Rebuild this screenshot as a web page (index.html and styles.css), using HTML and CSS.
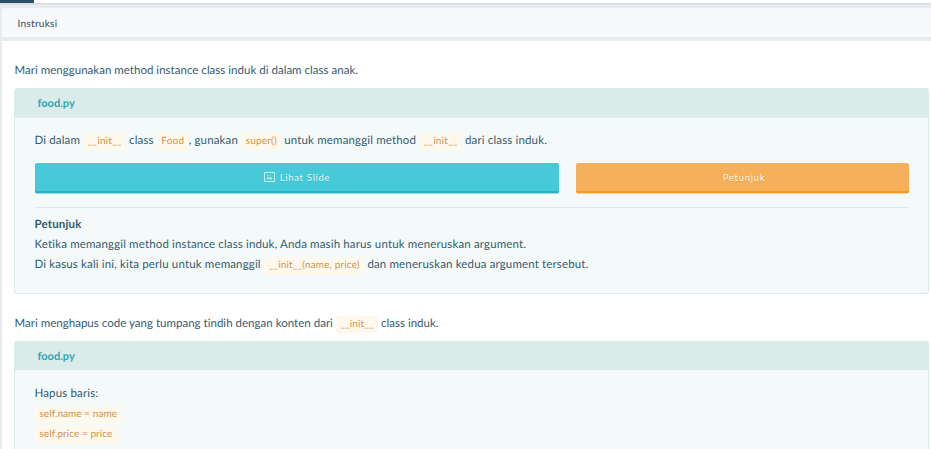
FILE: index.html
```html
<!DOCTYPE html>
<html lang="id">
<head>
<meta charset="utf-8">
<title>Instruksi</title>
<link rel="stylesheet" href="styles.css">
</head>
<body>
<div class="topbar"><div class="progress"></div></div>
<main class="panel">
  <header class="panel-header">Instruksi</header>
  <div class="content">
    <p class="lead">Mari menggunakan method instance class induk di dalam class anak.</p>
    <section class="card">
      <h2 class="file">food.py</h2>
      <div class="card-body">
        <p class="line task">Di dalam <code>__init__</code> class <code>Food</code>, gunakan <code>super()</code> untuk memanggil method <code>__init__</code> dari class induk.</p>
        <div class="buttons">
          <button class="btn slide"><svg class="icon" viewBox="0 0 11 10"><path d="M.5.5h10v9H.5z" fill="none" stroke="currentColor"/><path d="M2.8 7.5V6l1.5-1.4 1.2 1.2 1.3-1.2 1.5 1.6v1.3z" fill="currentColor" opacity=".8"/><path d="M3 3h1.4v1H3zM6 2.8h1.2v1H6z" fill="currentColor" opacity=".7"/></svg>Lihat Slide</button>
          <button class="btn hint">Petunjuk</button>
        </div>
        <div class="hint-text">
          <p class="line"><strong>Petunjuk</strong></p>
          <p class="line">Ketika memanggil method instance class induk, Anda masih harus untuk meneruskan argument.</p>
          <p class="line last">Di kasus kali ini, kita perlu untuk memanggil <code>__init__(name, price)</code> dan meneruskan kedua argument tersebut.</p>
        </div>
      </div>
    </section>
    <p class="lead second">Mari menghapus code yang tumpang tindih dengan konten dari <code>__init__</code> class induk.</p>
    <section class="card partial">
      <h2 class="file">food.py</h2>
      <div class="card-body">
        <p class="line">Hapus baris:</p>
        <p class="line"><code class="first">self.name = name</code></p>
        <p class="line"><code class="first">self.price = price</code></p>
      </div>
    </section>
  </div>
</main>
</body>
</html>
```
FILE: styles.css
```css
* { box-sizing: border-box; }
body {
  margin: 0;
  height: 449px;
  overflow: hidden;
  background: #e8ecf1;
  color: #355b70;
  font: 11.5px/22px Lato, sans-serif;
  font-variant-ligatures: none;
  text-rendering: geometricPrecision;
}
p, h2 { margin: 0; }
.topbar { height: 3px; background: #fff; box-shadow: 0 1px 2px rgba(40, 60, 80, .12); }
.progress { width: 34px; height: 3px; background: #2a5166; }
.panel { margin: 5px 0 0 2px; }
.panel-header {
  height: 29px;
  padding-left: 15.5px;
  border-radius: 4px 0 0 0;
  background: #f8f9fd;
  color: #384557;
  font-size: 10px;
  line-height: 32px;
  letter-spacing: .3px;
}
.content { margin-top: 4px; height: 408px; padding: 19px 2px 0 12px; background: #fff; overflow: hidden; }
.lead { height: 20px; padding-left: .5px; white-space: nowrap; letter-spacing: .02px; }
.card {
  height: 206px;
  margin-top: 8px;
  border: 1px solid #daebea;
  border-radius: 3px;
  background: #f4faf9;
}
.file {
  height: 29px;
  padding-left: 22.5px;
  background: #daebea;
  color: #2ba8b3;
  font-size: 11px;
  line-height: 30px;
}
.card-body { padding: 12px 19px 0 20px; }
.line { height: 20px; margin-left: -.5px; white-space: nowrap; letter-spacing: .15px; }
.task { letter-spacing: .15px; }
.second { margin-top: 19px; }
.partial { height: 108px; border-bottom: 0; border-radius: 3px 3px 0 0; }
.partial .file { height: 28px; }
.partial .card-body { padding-top: 13px; }
code {
  display: inline-block;
  height: 18px;
  padding: 0 4.3px;
  border-radius: 4px;
  background: #fff9ed;
  color: #d0924e;
  font: 10px/17px Lato, sans-serif;
  letter-spacing: .15px;
}
.task code { margin-left: .2px; padding: 0 4.4px; letter-spacing: .18px; }
.last code { margin: 0 .3px 0 .6px; line-height: 16px; }
code.first { margin-left: .7px; letter-spacing: .06px; }
.buttons { display: grid; grid-template-columns: 524px 1fr; gap: 17px; margin-top: 13px; }
.btn {
  display: flex;
  align-items: center;
  justify-content: center;
  height: 30px;
  padding: 0 0 2px;
  border: 0;
  border-radius: 2px;
  color: rgba(255, 255, 255, .9);
  font: 9.5px Lato, sans-serif;
  letter-spacing: .7px;
  text-shadow: 0 1px 1px rgba(0, 0, 0, .12);
}
.slide { background: #46cad7; box-shadow: inset 0 -2px #27b3c3, 0 1px #99dce2; }
.hint { padding-left: 3px; background: #f7b05a; box-shadow: inset 0 -2px #f59b25, 0 1px #f5d2a5; }
.icon { width: 11px; height: 10px; margin-right: 5px; opacity: .75; }
.hint-text { margin-top: 14px; padding-top: 6px; border-top: 1px solid #daebea; }
```
